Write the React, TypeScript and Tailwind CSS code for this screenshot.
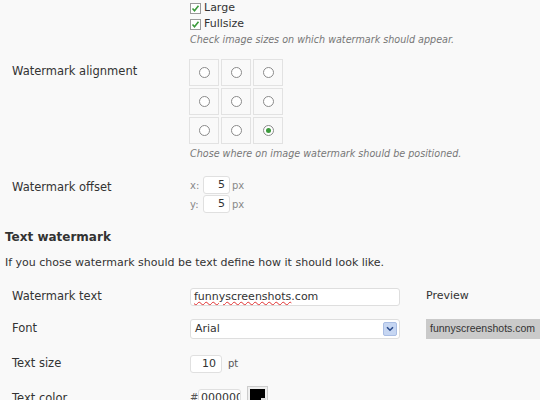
import React from 'react';

const font = { fontFamily: '"DejaVu Sans", Verdana, sans-serif' };

function Check({ label }: { label: string }) {
	return (
		<div className="flex items-center h-4 gap-[3px]">
			<span className="w-[11px] h-[11px] border border-[#9a9a9a] bg-white flex items-center justify-center">
				<svg width="9" height="9" viewBox="0 0 9 9">
					<path d="M1.5 4.5 L3.5 6.8 L7.5 1.8" stroke="#3a9a3a" strokeWidth="1.6" fill="none" />
				</svg>
			</span>
			<span className="text-[11px] text-[#333]">{label}</span>
		</div>
	);
}

function Radio({ on }: { on?: boolean }) {
	return (
		<div className="w-[30px] h-[27px] border border-[#e2e2e2] bg-[#f9f9f9] flex items-center justify-center">
			<span className="w-[11px] h-[11px] rounded-full border border-[#8a8a8a] bg-white flex items-center justify-center">
				{on && <span className="w-[5px] h-[5px] rounded-full bg-[#3c9a3c]" />}
			</span>
		</div>
	);
}

function Label({ children }: { children: React.ReactNode }) {
	return <div className="w-[190px] shrink-0 pl-3 text-[11.5px] text-[#333]">{children}</div>;
}

export default function App() {
	return (
		<div className="w-[540px] h-[400px] overflow-hidden bg-[#f9f9f9] text-[#333]" style={font}>
			{/* image sizes */}
			<div className="flex">
				<Label>{''}</Label>
				<div className="flex flex-col">
					<Check label="Large" />
					<Check label="Fullsize" />
					<div className="mt-[1px] text-[9.6px] leading-[14px] italic text-[#777]">Check image sizes on which watermark should appear.</div>
				</div>
			</div>

			{/* alignment */}
			<div className="flex mt-[12px]">
				<div className="w-[190px] shrink-0 pl-3 pt-[4px] text-[11.5px]">Watermark alignment</div>
				<div className="flex flex-col">
					<div className="grid grid-cols-3 gap-[2px] w-[94px] -ml-[1px]">
						<Radio />
						<Radio />
						<Radio />
						<Radio />
						<Radio />
						<Radio />
						<Radio />
						<Radio />
						<Radio on />
					</div>
					<div className="mt-[3px] text-[9.6px] leading-[14px] italic text-[#777]">Chose where on image watermark should be positioned.</div>
				</div>
			</div>

			{/* offset */}
			<div className="flex mt-[15px]">
				<div className="w-[190px] shrink-0 pl-3 pt-[3px] text-[11.5px]">Watermark offset</div>
				<div className="flex flex-col gap-[1px]">
					{['x:', 'y:'].map((a) => (
						<div key={a} className="flex items-center h-[18px]">
							<span className="w-[13px] text-[10px] text-[#888]">{a}</span>
							<span className="w-[27px] h-[18px] bg-white border border-[#e0e0e0] rounded-[3px] text-[11px] text-right pr-[4px] leading-[16px]">5</span>
							<span className="ml-[2px] text-[10px] text-[#888]">px</span>
						</div>
					))}
				</div>
			</div>

			<div className="pl-[5px] mt-[16px] text-[12px] leading-[16px] font-bold text-[#333]">Text watermark</div>
			<div className="pl-[5px] mt-[11px] text-[11px] leading-[14px] text-[#333]">
				If you chose watermark should be text define how it should look like.
			</div>

			{/* watermark text */}
			<div className="flex items-center mt-[17px] h-[19px]">
				<Label>Watermark text</Label>
				<div className="w-[210px] shrink-0 h-[18px] bg-white border border-[#dedede] rounded-[3px] px-[3px] text-[11px] leading-[16px]">
					<span className="underline decoration-wavy decoration-[#e03030] decoration-1">funnyscreenshots</span>.com
				</div>
				<div className="ml-[26px] shrink-0 text-[11px] text-[#333]">Preview</div>
			</div>

			{/* font */}
			<div className="flex items-center mt-[13px] h-[20px]">
				<Label>Font</Label>
				<div className="w-[210px] shrink-0 h-[20px] bg-white border border-[#dedede] rounded-[3px] pl-[4px] pr-[2px] flex items-center justify-between text-[11px]">
					<span>Arial</span>
					<span className="w-[14px] h-[14px] rounded-[2px] bg-[#c6d6f2] border border-[#a9bde3] flex items-center justify-center">
						<svg width="8" height="6" viewBox="0 0 8 6">
							<path d="M1 1.2 L4 4.2 L7 1.2" stroke="#2a4a8a" strokeWidth="1.6" fill="none" />
						</svg>
					</span>
				</div>
				<div
					className="ml-[26px] shrink-0 h-[20px] flex items-center pl-[4px] pr-[6px] bg-[#cacaca] text-[10.5px] text-[#333] whitespace-nowrap"
					style={{ fontFamily: '"Liberation Sans", Arial, sans-serif' }}
				>
					funnyscreenshots.com
				</div>
			</div>

			{/* size */}
			<div className="flex items-center mt-[15px] h-[19px]">
				<Label>Text size</Label>
				<span className="w-[32px] h-[18px] bg-white border border-[#e0e0e0] rounded-[3px] text-[11px] text-right pr-[5px] leading-[16px]">10</span>
				<span className="ml-[6px] text-[10px] text-[#555]">pt</span>
			</div>

			{/* color */}
			<div className="flex items-start mt-[13px] h-[20px]">
				<div className="w-[190px] shrink-0 pl-3 pt-[4px] text-[11.5px]">Text color</div>
				<span className="w-[8px] pt-[4px] text-[10px] text-[#555]">#</span>
				<span className="w-[43px] h-[18px] mt-[3px] bg-white border border-[#e0e0e0] rounded-[3px] text-[11px] pl-[2px] leading-[16px] overflow-hidden whitespace-nowrap">000000</span>
				<span className="relative ml-[6px] w-[21px] h-[19px] border border-[#ccc] bg-[#eee] p-[2px]">
					<span className="block w-full h-full bg-black" />
					<span className="absolute right-[1px] bottom-[1px] w-[5px] h-[5px] bg-[#ddd]" />
				</span>
			</div>
		</div>
	);
}
